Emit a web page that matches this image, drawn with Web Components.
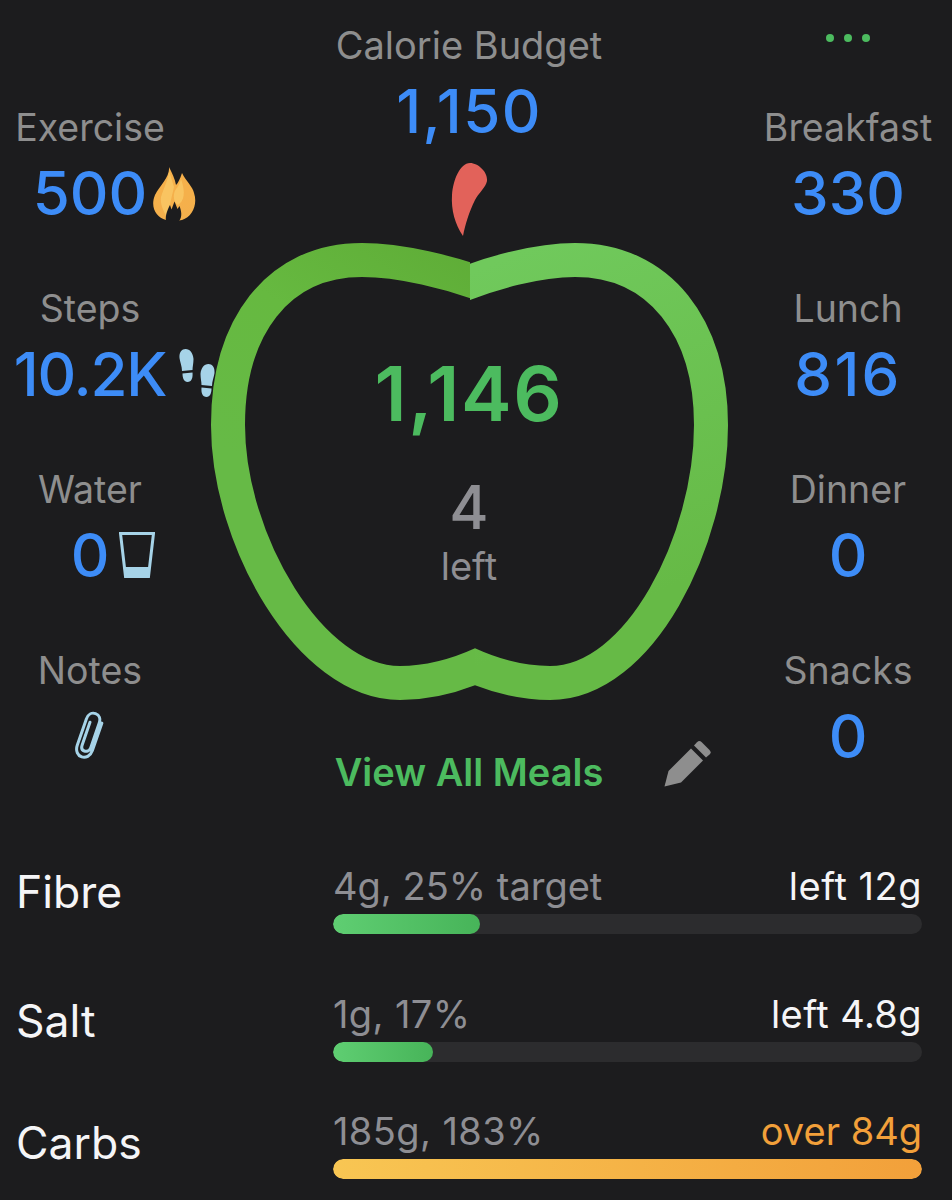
<!DOCTYPE html>
<html>
<head>
<meta charset="utf-8">
<style>
    html, body{ margin: 0; background: #1c1c1e; }
    body{ font-family: Inter, "Noto Sans", sans-serif; }
</style>
</head>
<body>
<cal-page>
    <cal-stat slot="left" label="Exercise" value="500">
        <svg slot="icon" width="44" height="54" viewBox="0 0 44 54" style="margin:-26px 0 0 5px;display:block">
            <defs><linearGradient id="fl" x1="0" y1="0" x2="0" y2="1"><stop offset="0" stop-color="#f6b04a"/><stop offset="1" stop-color="#f4b04c"/></linearGradient></defs>
            <path d="M17 0C18 10 8 18 3 28C-2 40 4 50 14 53C18 54 26 54 30 53C40 50 46 38 42 26C41 20 34 14 30 6C28 12 26 16 24 18C23 12 20 6 17 0Z" fill="url(#fl)"/>
            <path d="M17 4C16 14 12 20 9 30C8 36 11 44 15 50L22 20Z M24 22C20 28 22 36 26 38C32 34 34 26 29 12C28 16 26 20 24 22Z" fill="#fbd06d" opacity=".65"/>
            <path d="M14 54C13 48 16 42 18 38L19.500 42.500L22.500 34.500L25.500 42L27.500 39C29.500 44 30.500 50 27 54Z" fill="#1c1c1e"/>
        </svg>
    </cal-stat>
    <cal-stat slot="left" label="Steps" value="10.2K" style="--track:-1.200px">
        <svg slot="icon" width="36" height="48" viewBox="0 0 36 48" style="margin:-25px 0 0 13px;display:block">
            <g fill="#a6d3e8">
                <path d="M0.500 9C0 3 3 0 6.500 0C11 0 14 4 14.500 10C14.500 14 13.500 18 13.500 21L3 22C3 17 1 13 0.500 9Z"/>
                <path d="M3.500 24.500L13.500 23.500C14 29 12.500 33 8.500 33C5 33 3.500 29 3.500 24.500Z"/>
                <path d="M35.500 24C36 18 33 15 29.500 15C25 15 22 19 21.500 25C21.500 29 22.500 33 22.500 36L33 37C33 32 35 28 35.500 24Z"/>
                <path d="M32.500 39.500L22.500 38.500C22 44 23.500 48 27.500 48C31 48 32.500 44 32.500 39.500Z"/>
            </g>
        </svg>
    </cal-stat>
    <cal-stat slot="left" label="Water" value="0">
        <svg slot="icon" width="36" height="46" viewBox="0 0 36 46" style="margin:-23px 0 0 10px;display:block">
            <path d="M1.500 1.500H34.500L29.500 44.500H6.500Z" fill="none" stroke="#a6d3e8" stroke-width="3"/>
            <path d="M5 35H31L29.500 45H6.500Z" fill="#a6d3e8"/>
        </svg>
    </cal-stat>
    <cal-stat slot="left" label="Notes">
        <svg slot="inline" width="34" height="50" viewBox="0 0 34 50" style="display:block;margin-top:10px">
            <g transform="rotate(19 17 25)" fill="none" stroke="#a6d3e8" stroke-width="3" stroke-linecap="round">
                <path d="M24 9V38C24 44 20 47.500 16 47.500C12 47.500 8 44 8 38V10C8 5 11 2 15 2C19 2 21.500 5 21.500 10V36C21.500 39 19 41 16.500 41C14 41 12.500 39 12.500 36V12"/>
            </g>
        </svg>
    </cal-stat>

    <cal-stat slot="right" label="Breakfast" value="330"></cal-stat>
    <cal-stat slot="right" label="Lunch" value="816" style="--track:2.300px"></cal-stat>
    <cal-stat slot="right" label="Dinner" value="0"></cal-stat>
    <cal-stat slot="right" label="Snacks" value="0"></cal-stat>

    <cal-nutrient slot="rows" name="Fibre" info="4g, 25% target" rest="left 12g" percent="25" style="--gap:70px;--name-top:3px;--rest-track:.5px"></cal-nutrient>
    <cal-nutrient slot="rows" name="Salt" info="1g, 17%" rest="left 4.8g" percent="17" style="--gap:58px;--name-top:4px;--track:.4px"></cal-nutrient>
    <cal-nutrient slot="rows" name="Carbs" info="185g, 183%" rest="over 84g" percent="100" over style="--gap:47px;--name-top:9px;--track:.4px;--rest-track:0"></cal-nutrient>
</cal-page>

<script>
const CalStatTemplate = document.createElement('template');
CalStatTemplate.innerHTML = `
    <style>
        :host{
            display: flex;
            flex-direction: column;
            align-items: center;
            gap: 8px;
            height: 122px;
        }
        .label{
            font-size: 37.5px;
            line-height: 44px;
            color: #8e8e8e;
            white-space: nowrap;
        }
        .number{
            position: relative;
            height: 70px;
            font-size: 60px;
            line-height: 70px;
            font-weight: 450;
            letter-spacing: var(--track, 0);
            color: #3d8cf7;
            white-space: nowrap;
        }
        .icon{
            position: absolute;
            left: 100%;
            top: 50%;
        }
    </style>
    <div class="label"></div>
    <div class="number"><span class="value"></span><slot name="inline"></slot><div class="icon"><slot name="icon"></slot></div></div>
`;

class CalStat extends HTMLElement{
    constructor(){
        super();
        this.attachShadow({mode: 'open'});
        this.shadowRoot.append(CalStatTemplate.content.cloneNode(true));
    }
    connectedCallback(){
        this.shadowRoot.querySelector('.label').textContent = this.getAttribute('label');
        this.shadowRoot.querySelector('.value').textContent = this.getAttribute('value') ?? '';
    }
}
customElements.define('cal-stat', CalStat);

const CalAppleTemplate = document.createElement('template');
CalAppleTemplate.innerHTML = `
    <style>
        :host{
            display: block;
            position: relative;
            width: 578px;
            height: 550px;
        }
        svg{ display: block; }
        .middle{
            position: absolute;
            inset: 188px 0 0 0;
            display: flex;
            flex-direction: column;
            align-items: center;
        }
        .eaten{
            font-size: 76px;
            line-height: 90px;
            font-weight: 560;
            letter-spacing: 1.600px;
            color: #4cbb5f;
        }
        .remaining{
            margin-top: 34px;
            font-size: 60px;
            line-height: 70px;
            font-weight: 500;
            color: #8e8e93;
        }
        .word{
            margin-top: 2px;
            font-size: 38px;
            line-height: 44px;
            color: #8e8e93;
        }
    </style>
    <svg width="578" height="550" viewBox="180 160 578 550">
        <defs>
            <clipPath id="side-l"><path d="M180 160H470V480H475V710H180Z"/></clipPath>
            <clipPath id="side-r"><path d="M758 160H470V480H475V710H758Z"/></clipPath>
            <linearGradient id="half-l" gradientUnits="userSpaceOnUse" x1="470" y1="250" x2="300" y2="500">
                <stop offset="0" stop-color="#5fad37"/><stop offset="0.5" stop-color="#66b940"/><stop offset="1" stop-color="#66ba46"/>
            </linearGradient>
            <linearGradient id="half-r" gradientUnits="userSpaceOnUse" x1="500" y1="260" x2="640" y2="600">
                <stop offset="0" stop-color="#70c95c"/><stop offset="1" stop-color="#66ba46"/>
            </linearGradient>
        </defs>
        <path d="M463 236C455 224 451 210 452 195C453 180 460 163 470 163C478 163 488 172 487 181C486 187 478 194 475 200C469 212 465 225 463 236Z" fill="#e2625a"/>
        <path clip-path="url(#side-l)" d="M490 287C450 272 400 260 362 260C277 260 228 328 228 425C228 540 310 683 400 683C430 683 460 675 490 660" fill="none" stroke="url(#half-l)" stroke-width="34"/>
        <path clip-path="url(#side-r)" d="M450 290C490 272 540 260 575 260C660 260 711 328 711 425C711 540 640 683 550 683C520 683 490 675 460 660" fill="none" stroke="url(#half-r)" stroke-width="34"/>
    </svg>
    <div class="middle">
        <div class="eaten"><slot name="eaten"></slot></div>
        <div class="remaining"><slot name="remaining"></slot></div>
        <div class="word"><slot name="word"></slot></div>
    </div>
`;

class CalApple extends HTMLElement{
    constructor(){
        super();
        this.attachShadow({mode: 'open'});
        this.shadowRoot.append(CalAppleTemplate.content.cloneNode(true));
    }
}
customElements.define('cal-apple', CalApple);

const CalNutrientTemplate = document.createElement('template');
CalNutrientTemplate.innerHTML = `
    <style>
        :host{
            display: grid;
            grid-template-columns: 317px 589px;
            padding-left: 16px;
            margin-top: var(--gap, 50px);
        }
        .name{
            padding-top: var(--name-top, 5px);
            font-size: 44.500px;
            line-height: 50px;
            color: #f5f5f7;
        }
        .head{
            display: flex;
            justify-content: space-between;
            height: 44px;
            margin-bottom: 6px;
            font-size: 38px;
            line-height: 44px;
            letter-spacing: var(--track, 0);
        }
        .info{ color: #8e8e93; }
        .rest{ color: #f5f5f7; letter-spacing: var(--rest-track, var(--track, 0)); }
        .track{
            height: 20px;
            border-radius: 10px;
            background: #2c2c2e;
            overflow: hidden;
        }
        .fill{
            height: 100%;
            border-radius: 10px;
            background: linear-gradient(90deg, #5fce72, #47b459);
        }
        :host([over]) .rest{ color: #f2a03a; }
        :host([over]) .fill{ background: linear-gradient(90deg, #f8c653, #f2a03a); }
    </style>
    <div class="name"></div>
    <div>
        <div class="head"><span class="info"></span><span class="rest"></span></div>
        <div class="track"><div class="fill"></div></div>
    </div>
`;

class CalNutrient extends HTMLElement{
    constructor(){
        super();
        this.attachShadow({mode: 'open'});
        this.shadowRoot.append(CalNutrientTemplate.content.cloneNode(true));
    }
    connectedCallback(){
        this.shadowRoot.querySelector('.name').textContent = this.getAttribute('name');
        this.shadowRoot.querySelector('.info').textContent = this.getAttribute('info');
        this.shadowRoot.querySelector('.rest').textContent = this.getAttribute('rest');
        this.shadowRoot.querySelector('.fill').style.width = this.getAttribute('percent') + '%';
    }
}
customElements.define('cal-nutrient', CalNutrient);

const CalPageTemplate = document.createElement('template');
CalPageTemplate.innerHTML = `
    <style>
        :host{
            display: block;
            height: 1200px;
            overflow: hidden;
            background: #1c1c1e;
            font-family: Inter, "Noto Sans", sans-serif;
        }
        .top{
            display: grid;
            grid-template-columns: 180px 578px 194px;
            height: 794px;
        }
        .side{
            display: flex;
            flex-direction: column;
            gap: 59px;
            padding-top: 106px;
        }
        .side.right{
            position: relative;
            padding-right: 14px;
        }
        .dots{
            position: absolute;
            top: 34px;
            left: 68px;
            display: flex;
            gap: 10px;
        }
        .dots i{
            width: 8px;
            height: 8px;
            border-radius: 50%;
            background: #4cbb5f;
        }
        .center{
            display: flex;
            flex-direction: column;
            align-items: center;
            padding-top: 23px;
        }
        .title{
            font-size: 38px;
            line-height: 44px;
            color: #8e8e8e;
        }
        .budget{
            margin-top: 9px;
            margin-bottom: 14px;
            font-size: 60px;
            line-height: 70px;
            font-weight: 450;
            letter-spacing: 1.400px;
            color: #3d8cf7;
        }
        .meals{
            position: relative;
            margin-top: 40px;
            font-size: 38px;
            line-height: 44px;
            font-weight: 600;
            color: #4cbb5f;
        }
        .meals svg{
            position: absolute;
            left: 329px;
            top: -9px;
        }
    </style>
    <div class="top">
        <div class="side"><slot name="left"></slot></div>
        <div class="center">
            <div class="title">Calorie Budget</div>
            <div class="budget">1,150</div>
            <cal-apple>
                <span slot="eaten">1,146</span>
                <span slot="remaining">4</span>
                <span slot="word">left</span>
            </cal-apple>
            <div class="meals">View All Meals
                <svg width="47" height="46" viewBox="0 0 47 46" fill="#8e8e8e">
                    <path d="M0.500 45.500L4.500 30L27 7.500L39 19.500L17 41.500Z"/>
                    <path d="M30 4.500L33 1.200C34.500 -0.300 36 -0.300 37.500 1L45.500 9C47 10.500 47 12 45.500 13.500L42 16.500Z"/>
                </svg>
            </div>
        </div>
        <div class="side right">
            <div class="dots"><i></i><i></i><i></i></div>
            <slot name="right"></slot>
        </div>
    </div>
    <slot name="rows"></slot>
`;

class CalPage extends HTMLElement{
    constructor(){
        super();
        this.attachShadow({mode: 'open'});
        this.shadowRoot.append(CalPageTemplate.content.cloneNode(true));
    }
}
customElements.define('cal-page', CalPage);
</script>
</body>
</html>
